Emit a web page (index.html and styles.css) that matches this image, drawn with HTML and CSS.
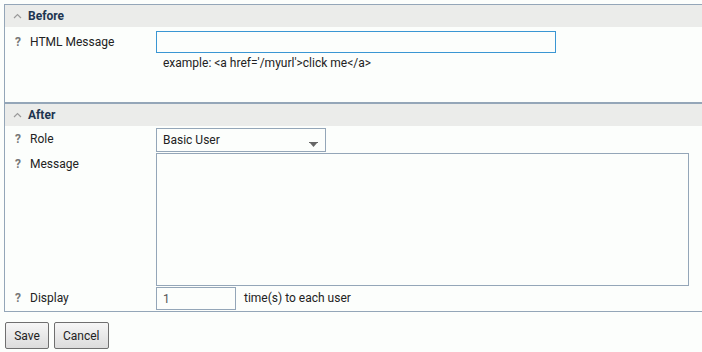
FILE: index.html
```html
<html lang="en">
<head>
    <meta charset="UTF-8">
    <title>Message</title>
    <link rel="stylesheet" href="styles.css">
</head>
<body>
<div class="box">
    <div class="section">
        <div class="head">
            <svg class="caret" width="9" height="6" viewBox="0 0 9 6"><polyline points="1,5 4.5,1.5 8,5" fill="none" stroke="#9a9a9a" stroke-width="1.2"/></svg>
            <span>Before</span>
        </div>
        <div class="body first">
            <div class="row">
                <div class="label"><b class="help">?</b>HTML Message</div>
                <div class="field">
                    <input type="text" class="text wide focus">
                    <div class="hint">example: &lt;a href='/myurl'&gt;click me&lt;/a&gt;</div>
                </div>
            </div>
        </div>
    </div>

    <div class="section second">
        <div class="head">
            <svg class="caret" width="9" height="6" viewBox="0 0 9 6"><polyline points="1,5 4.5,1.5 8,5" fill="none" stroke="#9a9a9a" stroke-width="1.2"/></svg>
            <span>After</span>
        </div>
        <div class="body">
            <div class="row">
                <div class="label"><b class="help">?</b>Role</div>
                <div class="field">
                    <div class="select">
                        <span>Basic User</span>
                        <svg width="9" height="5" viewBox="0 0 9 5"><rect x="0" y="0" width="9" height="1" fill="#666"/><polygon points="1,1 8,1 4.5,5" fill="#666"/></svg>
                    </div>
                </div>
            </div>
            <div class="row">
                <div class="label"><b class="help">?</b>Message</div>
                <div class="field">
                    <textarea class="area"></textarea>
                </div>
            </div>
            <div class="row">
                <div class="label"><b class="help">?</b>Display</div>
                <div class="field inline">
                    <input type="text" class="text small" value="1">
                    <span>time(s) to each user</span>
                </div>
            </div>
        </div>
    </div>
</div>

<div class="buttons">
    <button class="btn save">Save</button>
    <button class="btn">Cancel</button>
</div>
</body>
</html>
```

FILE: styles.css
```css
* {
    margin: 0;
    padding: 0;
    box-sizing: border-box;
}

html, body {
    overflow: hidden;
}

body {
    background: #fcfefc;
    font-family: Roboto, "Liberation Sans", sans-serif;
    font-size: 12px;
    color: #222;
    padding: 4px 0 0 4px;
}

.box {
    width: 720px;
    border: 1px solid #94a6b8;
}

.section.second {
    border-top: 2px solid #94a6b8;
}

.head {
    height: 22px;
    background: #ebecea;
    display: flex;
    align-items: center;
    padding-left: 8px;
    font-weight: bold;
    color: #1d3550;
}

.head .caret {
    margin-right: 6px;
    margin-top: -1px;
}

.body {
    padding: 2px 0 1px 0;
    display: flex;
    flex-direction: column;
    gap: 1px;
}

.body.first {
    padding: 4px 0 32px 0;
}

.row {
    display: grid;
    grid-template-columns: 151px auto;
    align-items: start;
}

.label {
    padding: 4px 0 0 10px;
    line-height: 14px;
    display: flex;
}

.help {
    color: #777;
    width: 15px;
    font-size: 12px;
}

.text {
    display: block;
    height: 22px;
    border: 1px solid #94a6b8;
    background: #fcfefc;
    font-family: Roboto, "Liberation Sans", sans-serif;
    font-size: 12px;
    color: #555;
    padding: 0 6px;
    outline: none;
}

.text.wide {
    width: 400px;
}

.text.focus {
    border-color: #3a96d3;
}

.text.small {
    width: 80px;
    height: 23px;
}

.hint {
    padding: 3px 0 0 7px;
    line-height: 14px;
}

.select {
    width: 170px;
    height: 24px;
    border: 1px solid #94a6b8;
    display: flex;
    align-items: center;
    justify-content: space-between;
    padding: 0 6px 0 6px;
}

.select svg {
    margin-top: 8px;
    margin-right: 1px;
}

.area {
    display: block;
    width: 533px;
    height: 133px;
    border: 1px solid #94a6b8;
    background: #fcfefc;
    resize: none;
}

.field.inline {
    display: flex;
    align-items: center;
    gap: 8px;
    height: 23px;
}

.field.inline span {
    margin-top: -2px;
}

.buttons {
    margin-top: 10px;
    margin-left: 1px;
    display: flex;
    gap: 5px;
}

.btn {
    height: 27px;
    padding: 0 8px;
    border: 1px solid #6f6f6f;
    border-radius: 2px;
    background: linear-gradient(#f6f6f6, #dcdcdc);
    font-family: Roboto, "Liberation Sans", sans-serif;
    font-size: 12px;
    color: #222;
}

.btn.save {
    width: 44px;
    padding: 0;
}
```
